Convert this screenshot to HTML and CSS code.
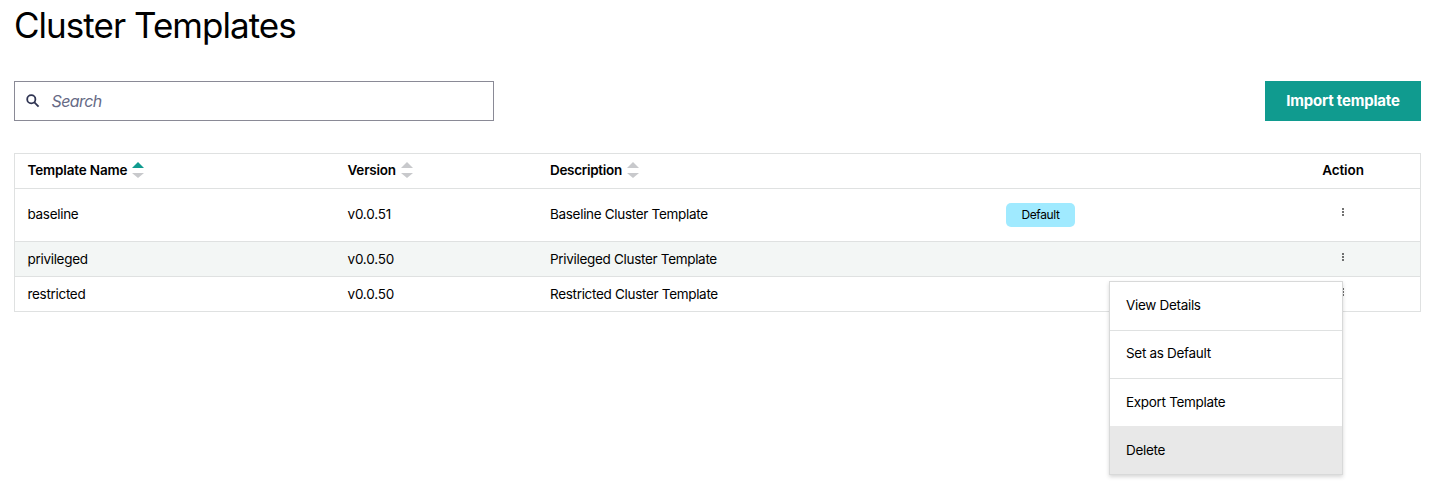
FILE: index.html
```html
<!DOCTYPE html>
<html lang="en">
<head>
<meta charset="utf-8">
<title>Cluster Templates</title>
<link rel="stylesheet" href="styles.css">
</head>
<body>
<main class="page">
  <h1 class="title">Cluster Templates</h1>
  <div class="toolbar">
    <label class="search">
      <svg class="search-icon" viewBox="0 0 14 14" width="14" height="14"><circle cx="5.3" cy="5.3" r="4.1"/><path d="M8.4 8.4L12.6 12.6"/></svg>
      <span class="placeholder">Search</span>
    </label>
    <button class="import">Import template</button>
  </div>
  <section class="table">
    <div class="row head">
      <div class="cell"><span class="label-name">Template Name</span><svg class="sort" viewBox="0 0 12 16" width="12" height="16"><path class="on" d="M0 6L6 0L12 6Z"/><path d="M0 11L12 11L6 16Z"/></svg></div>
      <div class="cell"><span class="label-version">Version</span><svg class="sort" viewBox="0 0 12 16" width="12" height="16"><path d="M0 6L6 0L12 6Z"/><path d="M0 11L12 11L6 16Z"/></svg></div>
      <div class="cell"><span>Description</span><svg class="sort" viewBox="0 0 12 16" width="12" height="16"><path d="M0 6L6 0L12 6Z"/><path d="M0 11L12 11L6 16Z"/></svg></div>
      <div class="cell"></div>
      <div class="cell action"><span class="label-action">Action</span></div>
    </div>
    <div class="row tall">
      <div class="cell">baseline</div>
      <div class="cell version">v0.0.51</div>
      <div class="cell">Baseline Cluster Template</div>
      <div class="cell"><span class="badge">Default</span></div>
      <div class="cell action"><svg class="dots" viewBox="0 0 2 8" width="2" height="8"><path d="M0 .3h2v1.5h-2zM0 3.3h2v1.5h-2zM0 6.3h2v1.5h-2z"/></svg></div>
    </div>
    <div class="row shaded">
      <div class="cell">privileged</div>
      <div class="cell version">v0.0.50</div>
      <div class="cell">Privileged Cluster Template</div>
      <div class="cell"></div>
      <div class="cell action"><svg class="dots" viewBox="0 0 2 8" width="2" height="8"><path d="M0 .3h2v1.5h-2zM0 3.3h2v1.5h-2zM0 6.3h2v1.5h-2z"/></svg></div>
    </div>
    <div class="row">
      <div class="cell">restricted</div>
      <div class="cell version">v0.0.50</div>
      <div class="cell">Restricted Cluster Template</div>
      <div class="cell"></div>
      <div class="cell action"><svg class="dots" viewBox="0 0 2 8" width="2" height="8"><path d="M0 .3h2v1.5h-2zM0 3.3h2v1.5h-2zM0 6.3h2v1.5h-2z"/></svg></div>
    </div>
  </section>
  <div class="menu">
    <div class="item">View Details</div>
    <div class="item">Set as Default</div>
    <div class="item">Export Template</div>
    <div class="item active">Delete</div>
  </div>
</main>
</body>
</html>
```
FILE: styles.css
```css
* { box-sizing: border-box; }
body { margin: 0; background: #fff; color: #000; font-family: Inter, "Liberation Sans", sans-serif; font-size: 13.5px; letter-spacing: -0.31px; }
.page { position: relative; height: 489px; padding: 0 12px 0 14px; overflow: hidden; }
.title { margin: 0; height: 49px; line-height: 50px; font-size: 35px; font-weight: 400; letter-spacing: -0.97px; }
.toolbar { display: flex; justify-content: space-between; margin-top: 32px; }
.search { display: flex; align-items: center; gap: 11.5px; width: 480px; height: 40px; padding-left: 11px; border: 1px solid #8a8a96; }
.search-icon { fill: none; stroke: #2f3452; stroke-width: 1.8; }
.placeholder { color: #666a85; font-size: 16px; font-style: italic; letter-spacing: -0.6px; }
.import { width: 156px; height: 40px; padding: 0 0 1px; border: 0; background: #109b8f; color: #fff; font-family: inherit; font-size: 15px; font-weight: 700; letter-spacing: -0.2px; }
.table { margin-top: 32px; border: 1px solid #dfe1e1; }
.row { display: grid; grid-template-columns: 320px 202.5px 456px 287px 1fr; height: 35px; padding-left: 12.5px; border-top: 1px solid #dfe1e1; }
.head { height: 34px; padding-bottom: 2px; border-top: 0; font-weight: 600; }
.tall { height: 53px; }
.tall .cell { padding-bottom: 2px; }
.shaded { background: #f3f6f5; }
.cell { display: flex; align-items: center; white-space: nowrap; }
.action { width: 100px; justify-content: center; }
.label-name { letter-spacing: -0.15px; }
.label-version { letter-spacing: -0.2px; }
.label-action { letter-spacing: -0.1px; }
.sort { margin-left: 5px; fill: #c8c9cc; }
.sort .on { fill: #109b8f; }
.version { letter-spacing: -0.2px; }
.badge { width: 69px; height: 24px; margin-top: 2px; border-radius: 5px; background: #a0eaff; font-size: 12px; line-height: 24px; text-align: center; letter-spacing: -0.4px; }
.dots { margin-bottom: 4px; fill: #444; }
.menu { position: absolute; left: 1109px; top: 281px; width: 234px; height: 194px; border: 1px solid #d8d9d9; background: #fff; box-shadow: 0 2px 4px rgba(0,0,0,.16); }
.item { height: 48px; padding-left: 16px; line-height: 47px; border-bottom: 1px solid #dfe1e1; }
.item:first-child { height: 49px; }
.item:nth-child(2) { line-height: 45px; }
.item:nth-child(3) { border-bottom-color: #e8e8e8; }
.active { height: 47px; border: 0; background: #e8e8e8; }
```
